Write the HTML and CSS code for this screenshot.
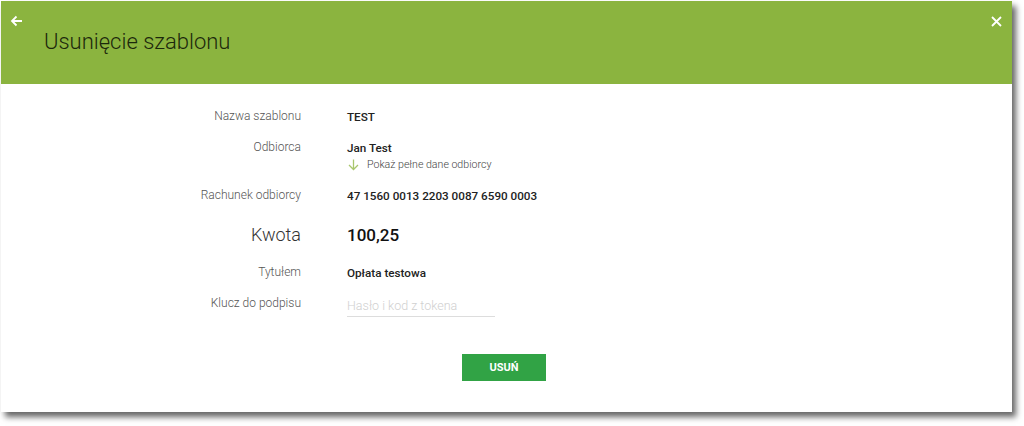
FILE: index.html
```html
<!DOCTYPE html>
<html lang="pl">
  <head>
    <meta charset="UTF-8">
    <meta name="viewport" content="width=device-width, initial-scale=1.0">
    <title>Usunięcie szablonu</title>
    <link rel="stylesheet" href="styles.css">
  </head>

  <body>
    <div class="dialog">
      <div class="dialog-head">
        <span class="back-btn">
          <svg width="13" height="12" viewBox="0 0 13 12">
            <path d="M12 6H2M6.5 1.5L2 6l4.5 4.5" fill="none" stroke="#fff" stroke-width="1.8"/>
          </svg>
        </span>
        <h1 class="title">Usunięcie szablonu</h1>
        <span class="close-btn">
          <svg width="11" height="11" viewBox="0 0 11 11">
            <path d="M1 1l9 9M10 1l-9 9" fill="none" stroke="#fff" stroke-width="1.8"/>
          </svg>
        </span>
      </div>

      <div class="dialog-body">
        <div class="row">
          <div class="label">Nazwa szablonu</div>
          <div class="value">TEST</div>
        </div>
        <div class="row row-tall">
          <div class="label">Odbiorca</div>
          <div class="value">
            Jan Test
            <div class="more">
              <svg width="11" height="12" viewBox="0 0 11 12">
                <path d="M5.5 0.5v10M1 6l4.5 4.5L10 6" fill="none" stroke="#a9c76d" stroke-width="1.3"/>
              </svg>
              <span>Pokaż pełne dane odbiorcy</span>
            </div>
          </div>
        </div>
        <div class="row">
          <div class="label">Rachunek odbiorcy</div>
          <div class="value">47 1560 0013 2203 0087 6590 0003</div>
        </div>
        <div class="row row-big">
          <div class="label">Kwota</div>
          <div class="value">100,25</div>
        </div>
        <div class="row">
          <div class="label">Tytułem</div>
          <div class="value">Opłata testowa</div>
        </div>
        <div class="row">
          <div class="label">Klucz do podpisu</div>
          <div class="value">
            <input class="token" type="text" placeholder="Hasło i kod z tokena">
          </div>
        </div>

        <div class="actions">
          <button class="btn-delete">USUŃ</button>
        </div>
      </div>
    </div>
  </body>
</html>
```

FILE: styles.css
```css
* {
  margin: 0;
  padding: 0;
  box-sizing: border-box;
}

html,
body {
  min-height: 100vh;
}

body {
  background-color: #fff;
  font-family: Roboto, "Liberation Sans", sans-serif;
  padding: 1px 0 0 1px;
}

.dialog {
  width: 1011px;
  height: 411px;
  background-color: #fff;
  box-shadow: 4px 5px 6px rgba(0, 0, 0, 0.6);
}

.dialog-head {
  height: 83px;
  background-color: #8bb43f;
  display: flex;
  align-items: flex-start;
  position: relative;
}

.back-btn {
  position: absolute;
  left: 9px;
  top: 11px;
}

.close-btn {
  position: absolute;
  right: 10px;
  top: 11px;
}

.title {
  margin: 28px 0 0 43px;
  font-size: 22px;
  font-weight: 300;
  line-height: 26px;
  color: #1c280c;
}

.dialog-body {
  padding-top: 24px;
}

.row {
  display: flex;
  margin-bottom: 13px;
  font-size: 12px;
}

.row-tall {
  margin-bottom: 14px;
}

.row-big {
  margin-top: 18px;
  margin-bottom: 17px;
}

.label {
  width: 300px;
  text-align: right;
  line-height: 16px;
  color: #555;
  font-weight: 300;
}

.value {
  margin-left: 46px;
  font-size: 11.7px;
  line-height: 18px;
  font-weight: 500;
  color: #222;
}

.row-big .label {
  font-size: 18px;
  line-height: 24px;
  color: #333;
}

.row-big .value {
  font-size: 17px;
  line-height: 24px;
  color: #111;
}

.more {
  display: flex;
  align-items: center;
  height: 16px;
  margin-left: 1px;
  font-size: 10.6px;
  font-weight: 300;
  color: #444;
}

.more svg {
  margin-right: 8px;
}

.token {
  width: 148px;
  height: 22px;
  border: none;
  border-bottom: 1px solid #ddd;
  font-family: inherit;
  font-size: 12.5px;
  font-weight: 300;
  color: #333;
  outline: none;
}

.token::placeholder {
  color: #d0d0d0;
}

.actions {
  display: flex;
  justify-content: center;
  padding-top: 24px;
  padding-right: 5px;
}

.btn-delete {
  width: 84px;
  height: 27px;
  border: none;
  background-color: #31a345;
  color: #fff;
  font-family: inherit;
  font-size: 11px;
  font-weight: 700;
}
```
